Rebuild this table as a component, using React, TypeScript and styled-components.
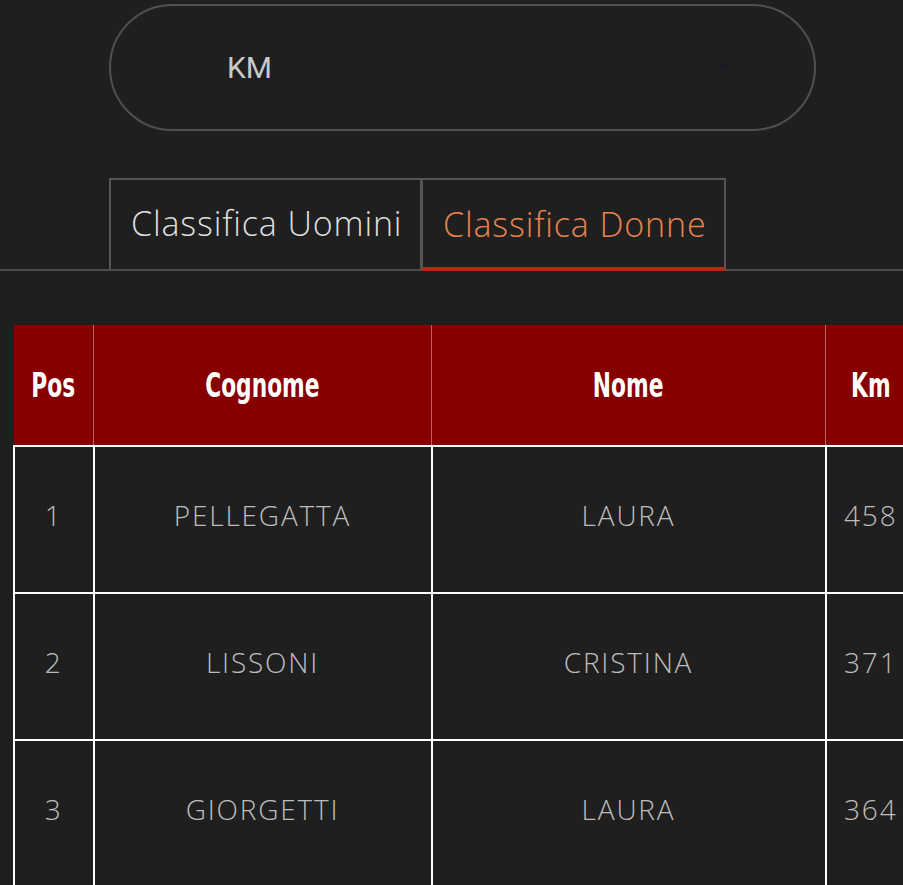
import styled, { createGlobalStyle } from "styled-components";

const GlobalStyle = createGlobalStyle`
    html, body {
        margin: 0;
        padding: 0;
        background: #1f1f1f;
        overflow: hidden;
    }
`

const Page = styled.div`
    width: 903px;
    height: 885px;
    overflow: hidden;
    padding-top: 4px;
    box-sizing: border-box;
    background: #1f1f1f;
`

const SelectBox = styled.div`
    position: relative;
    margin-left: 109px;
    width: 707px;
    height: 127px;
    box-sizing: border-box;
    border: 2px solid #505050;
    border-radius: 64px;

    display: flex;
    align-items: center;
    padding-left: 116px;

    font-family: Roboto, "Liberation Sans", sans-serif;
    font-size: 30px;
    color: #c9c9c9;
`

const Arrow = styled.span`
    position: absolute;
    right: 82px;
    top: 57px;
    width: 0;
    height: 0;
    border-left: 7px solid transparent;
    border-right: 7px solid transparent;
    border-top: 8px solid #191b22;
`

const TabBar = styled.div`
    display: flex;
    margin-top: 47px;
    padding-left: 109px;
    border-bottom: 2px solid #4c4c4c;
`

const Tab = styled.div<{ $active?: boolean; $width: number }>`
    width: ${p => p.$width}px;
    box-sizing: border-box;
    border: 2px solid #555;
    margin-left: ${p => (p.$active ? "-1px" : "0")};
    margin-bottom: ${p => (p.$active ? "-2px" : "0")};
    height: ${p => (p.$active ? "93px" : "91px")};
    border-bottom: ${p => (p.$active ? "4px solid #b32a13" : "none")};

    display: flex;
    align-items: center;
    padding-left: 20px;
    padding-bottom: ${p => (p.$active ? "0" : "4px")};

    font-family: "Open Sans", "Liberation Sans", sans-serif;
    font-weight: 300;
    font-size: 34px;
    letter-spacing: 0.85px;
    white-space: nowrap;
    color: ${p => (p.$active ? "#e8834e" : "#dedede")};
`

const TableWrap = styled.div`
    margin-top: 54px;
    margin-left: 13px;
    overflow: hidden;
`

const Table = styled.table<{ $width: number }>`
    border-collapse: collapse;
    table-layout: fixed;
    width: ${p => p.$width}px;
`

const HeadCell = styled.th<{ $width: number }>`
    width: ${p => p.$width}px;
    height: 120px;
    padding: 0;
    background: #870000;
    border-left: 1px solid rgba(255, 255, 255, 0.4);
    border-bottom: 2px solid #ffffff;
    color: #ffffff;
    text-align: center;
    white-space: nowrap;

    &:first-child {
        border-left: none;
    }
`

// condensed heading face (Oswald-like) squeezed out of a regular bold
const HeadLabel = styled.span`
    display: inline-block;
    font-family: "DejaVu Sans", "Liberation Sans", sans-serif;
    font-weight: 700;
    font-size: 34px;
    transform: scaleX(0.64);
`

const Cell = styled.td`
    height: 135px;
    padding: 0 0 10px;
    border: 2px solid #ffffff;
    text-align: center;
    white-space: nowrap;

    font-family: "Open Sans", "Liberation Sans", sans-serif;
    font-weight: 300;
    font-size: 28px;
    letter-spacing: 1.8px;
    color: #bdbdbd;
`

const columns = [
    { label: "Pos", width: 79 },
    { label: "Cognome", width: 337 },
    { label: "Nome", width: 393 },
    { label: "Km", width: 90 },
]

const rows = [
    { pos: 1, cognome: "PELLEGATTA", nome: "LAURA", km: 458 },
    { pos: 2, cognome: "LISSONI", nome: "CRISTINA", km: 371 },
    { pos: 3, cognome: "GIORGETTI", nome: "LAURA", km: 364 },
]

const tableWidth = columns.reduce((sum, c) => sum + c.width, 0)

export default function App() {
    return (
        <>
            <GlobalStyle />
            <Page>
                <SelectBox>
                    KM
                    <Arrow />
                </SelectBox>

                <TabBar>
                    <Tab $width={313}>Classifica Uomini</Tab>
                    <Tab $width={305} $active>Classifica Donne</Tab>
                </TabBar>

                <TableWrap>
                    <Table $width={tableWidth}>
                        <thead>
                            <tr>
                                {columns.map(c => (
                                    <HeadCell key={c.label} $width={c.width}>
                                        <HeadLabel>{c.label}</HeadLabel>
                                    </HeadCell>
                                ))}
                            </tr>
                        </thead>
                        <tbody>
                            {rows.map(r => (
                                <tr key={r.pos}>
                                    <Cell>{r.pos}</Cell>
                                    <Cell>{r.cognome}</Cell>
                                    <Cell>{r.nome}</Cell>
                                    <Cell>{r.km}</Cell>
                                </tr>
                            ))}
                        </tbody>
                    </Table>
                </TableWrap>
            </Page>
        </>
    )
}
